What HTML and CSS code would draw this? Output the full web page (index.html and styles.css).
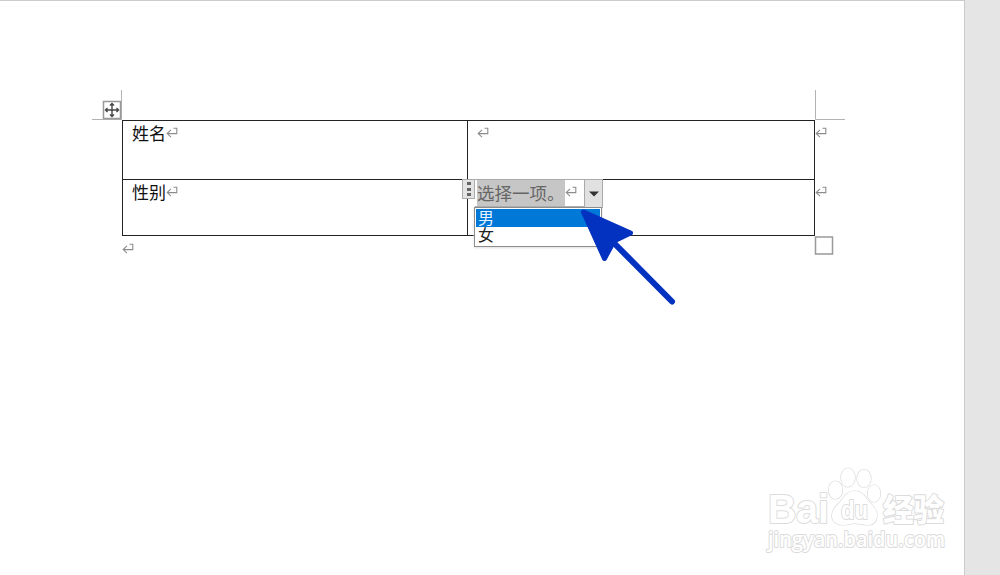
FILE: index.html
```html
<!DOCTYPE html>
<html lang="zh-CN">
<head>
<meta charset="utf-8">
<title>表格</title>
<link rel="stylesheet" href="styles.css">
</head>
<body>
<svg class="defs" width="0" height="0">
  <symbol id="ret" viewBox="0 0 12 12"><path d="M7.5 1.2H10.8V6.6H1.5M5 2.8L1.2 6.6L5 10.2"/></symbol>
</svg>
<div class="workspace">
  <main class="page">
    <div class="table">
      <div class="cell"><span class="text">姓名</span><svg class="ret"><use href="#ret"/></svg></div>
      <div class="cell"><svg class="ret"><use href="#ret"/></svg></div>
      <div class="rowend"><svg class="ret"><use href="#ret"/></svg></div>
      <div class="cell"><span class="text">性别</span><svg class="ret"><use href="#ret"/></svg></div>
      <div class="cell picker">
        <div class="control">
          <div class="grip"><i></i><i></i><i></i></div>
          <div class="field"><span class="placeholder">选择一项。</span><svg class="ret"><use href="#ret"/></svg></div>
          <div class="drop"><svg width="10" height="6"><path d="M0 .5H10L5 5.5Z"/></svg></div>
        </div>
        <div class="menu">
          <div class="option selected">男</div>
          <div class="option">女</div>
        </div>
      </div>
      <div class="rowend"><svg class="ret"><use href="#ret"/></svg></div>
    </div>
    <div class="after"><svg class="ret"><use href="#ret"/></svg></div>
    <svg class="marks" width="965" height="300">
      <path class="crop" d="M92 119.5H122M121.5 90V120M815.5 90V119.5H845"/>
      <rect class="handle" x="103.500" y="101.500" width="17" height="17"/>
      <path class="move" d="M105.500 110H118.500M112 103.500V116.500M107.500 108L105.500 110L107.500 112M116.500 108L118.500 110L116.500 112M110 105.500L112 103.500L114 105.500M110 114.500L112 116.500L114 114.500"/>
      <rect class="handle" x="815.500" y="237" width="17" height="17"/>
    </svg>
    <svg class="arrow" width="100" height="100" viewBox="578 206 100 100">
      <path class="head" d="M583.500 212L630.500 233L614 241L604.500 258.500Z"/>
      <path class="shaft" d="M610 239L672 301.500"/>
    </svg>
    <svg class="watermark" width="200" height="100" viewBox="760 460 200 100">
      <text class="latin" x="768" y="523" textLength="61" lengthAdjust="spacingAndGlyphs">Bai</text>
      <g class="paw">
        <ellipse cx="835.500" cy="490" rx="7" ry="9"/>
        <ellipse cx="848" cy="477.500" rx="7" ry="9.500"/>
        <ellipse cx="864" cy="478.500" rx="7" ry="9"/>
        <ellipse cx="874" cy="493.500" rx="6.500" ry="8.500"/>
        <path d="M854 491C847 491 844 497 840 502C835 507 832 510 832 516C832 522 837 525 843 525C848 525 850 523.500 855 523.500C861 523.500 863 525 868 525C874 525 877 521 877 515C877 508 872 506 867 499C863 493 860 491 854 491Z"/>
      </g>
      <text class="du" x="841" y="519" textLength="27" lengthAdjust="spacingAndGlyphs">du</text>
      <text class="han" x="883" y="521" textLength="61" lengthAdjust="spacingAndGlyphs">经验</text>
      <text class="url" x="768" y="547" textLength="177" lengthAdjust="spacingAndGlyphs">jingyan.baidu.com</text>
    </svg>
  </main>
</div>
</body>
</html>
```

FILE: styles.css
```css
body { margin: 0; background: #e5e5e5; font-family: "Noto Sans CJK SC", sans-serif; }
.defs { position: absolute; }
.workspace { height: 575px; overflow: hidden; }
.page {
  position: relative; box-sizing: border-box; width: 965px; height: 575px;
  padding: 119px 0 0 122px; background: #fff;
  border-top: 1px solid #cbcbcb; border-right: 1px solid #cbcbcb;
}
.table {
  position: relative; display: grid; width: 706px;
  grid-template-columns: 345px 348px 13px; grid-template-rows: 59px 57px;
}
.cell {
  display: flex; align-items: flex-start; box-sizing: border-box;
  border-top: 1px solid #222; border-left: 1px solid #222; padding-left: 9px;
}
.cell:nth-child(3n + 2) { border-right: 1px solid #222; }
.cell:nth-child(n + 4) { border-bottom: 1px solid #222; }
.text { font-size: 17px; line-height: 24px; width: 34px; color: #111; }
.ret { width: 12px; height: 12px; margin-top: 6px; flex: none; fill: none; stroke: #8c8c8c; stroke-width: 1.1; }
.rowend .ret { margin-top: 7px; display: block; }
.after { padding-top: 7px; }
.after .ret { margin: 0; display: block; }
.picker { position: relative; padding: 0; }
.control { display: flex; position: absolute; left: -6px; top: -1px; z-index: 1; }
.grip {
  box-sizing: border-box; width: 13px; height: 20px; padding: 2px 0;
  display: flex; flex-direction: column; align-items: center; justify-content: space-between;
  background: #e4e4e4; border: 1px solid #aaa;
}
.grip i { width: 4px; height: 3px; background: #666; }
.field { box-sizing: border-box; display: flex; width: 109px; height: 28px; padding-left: 2px; border-top: 1px solid #aaa; border-bottom: 1px solid #aaa; background: #fff; }
.placeholder { width: 88px; background: #c6c6c6; color: #666; font-size: 17.5px; line-height: 25px; white-space: nowrap; }
.drop {
  box-sizing: border-box; width: 19px; height: 29px; display: flex; align-items: center; justify-content: center;
  background: #e1e1e1; border: 1px solid #aaa; fill: #333;
}
.menu {
  position: absolute; left: 6px; top: 27px; z-index: 2; box-sizing: border-box;
  width: 128px; height: 40px; padding: 1px; background: #fff; border: 1px solid #8d8d8d;
  box-shadow: 0 1px 2px #ddd;
}
.option { height: 18px; padding-left: 2px; font-size: 16px; line-height: 15px; color: #222; }
.selected { line-height: 17px; background: #0078d7; color: #e5f3ff; }
.marks { position: absolute; left: 0; top: -1px; fill: none; }
.crop { stroke: #b2b2b2; }
.handle { stroke: #999; stroke-width: 1.5; fill: #fff; }
.move { stroke: #444; stroke-width: 1.4; }
.arrow { position: absolute; left: 578px; top: 205px; z-index: 3; stroke: #0432c0; stroke-linecap: round; stroke-linejoin: round; }
.head { fill: #0432c0; stroke-width: 5; }
.shaft { stroke-width: 6; }
.watermark { position: absolute; left: 760px; top: 459px; fill: #fff; stroke: #dcdcdc; stroke-width: 2; stroke-linejoin: round; paint-order: stroke; }
.paw { stroke-width: 1.2; stroke: #d5d5d5; }
.latin { font: bold 40px "Liberation Sans", sans-serif; }
.du { font: bold 25px "Liberation Sans", sans-serif; }
.han { font: 900 31px "Noto Sans CJK SC", sans-serif; }
.url { font: 600 21px "Open Sans", sans-serif; }
```
